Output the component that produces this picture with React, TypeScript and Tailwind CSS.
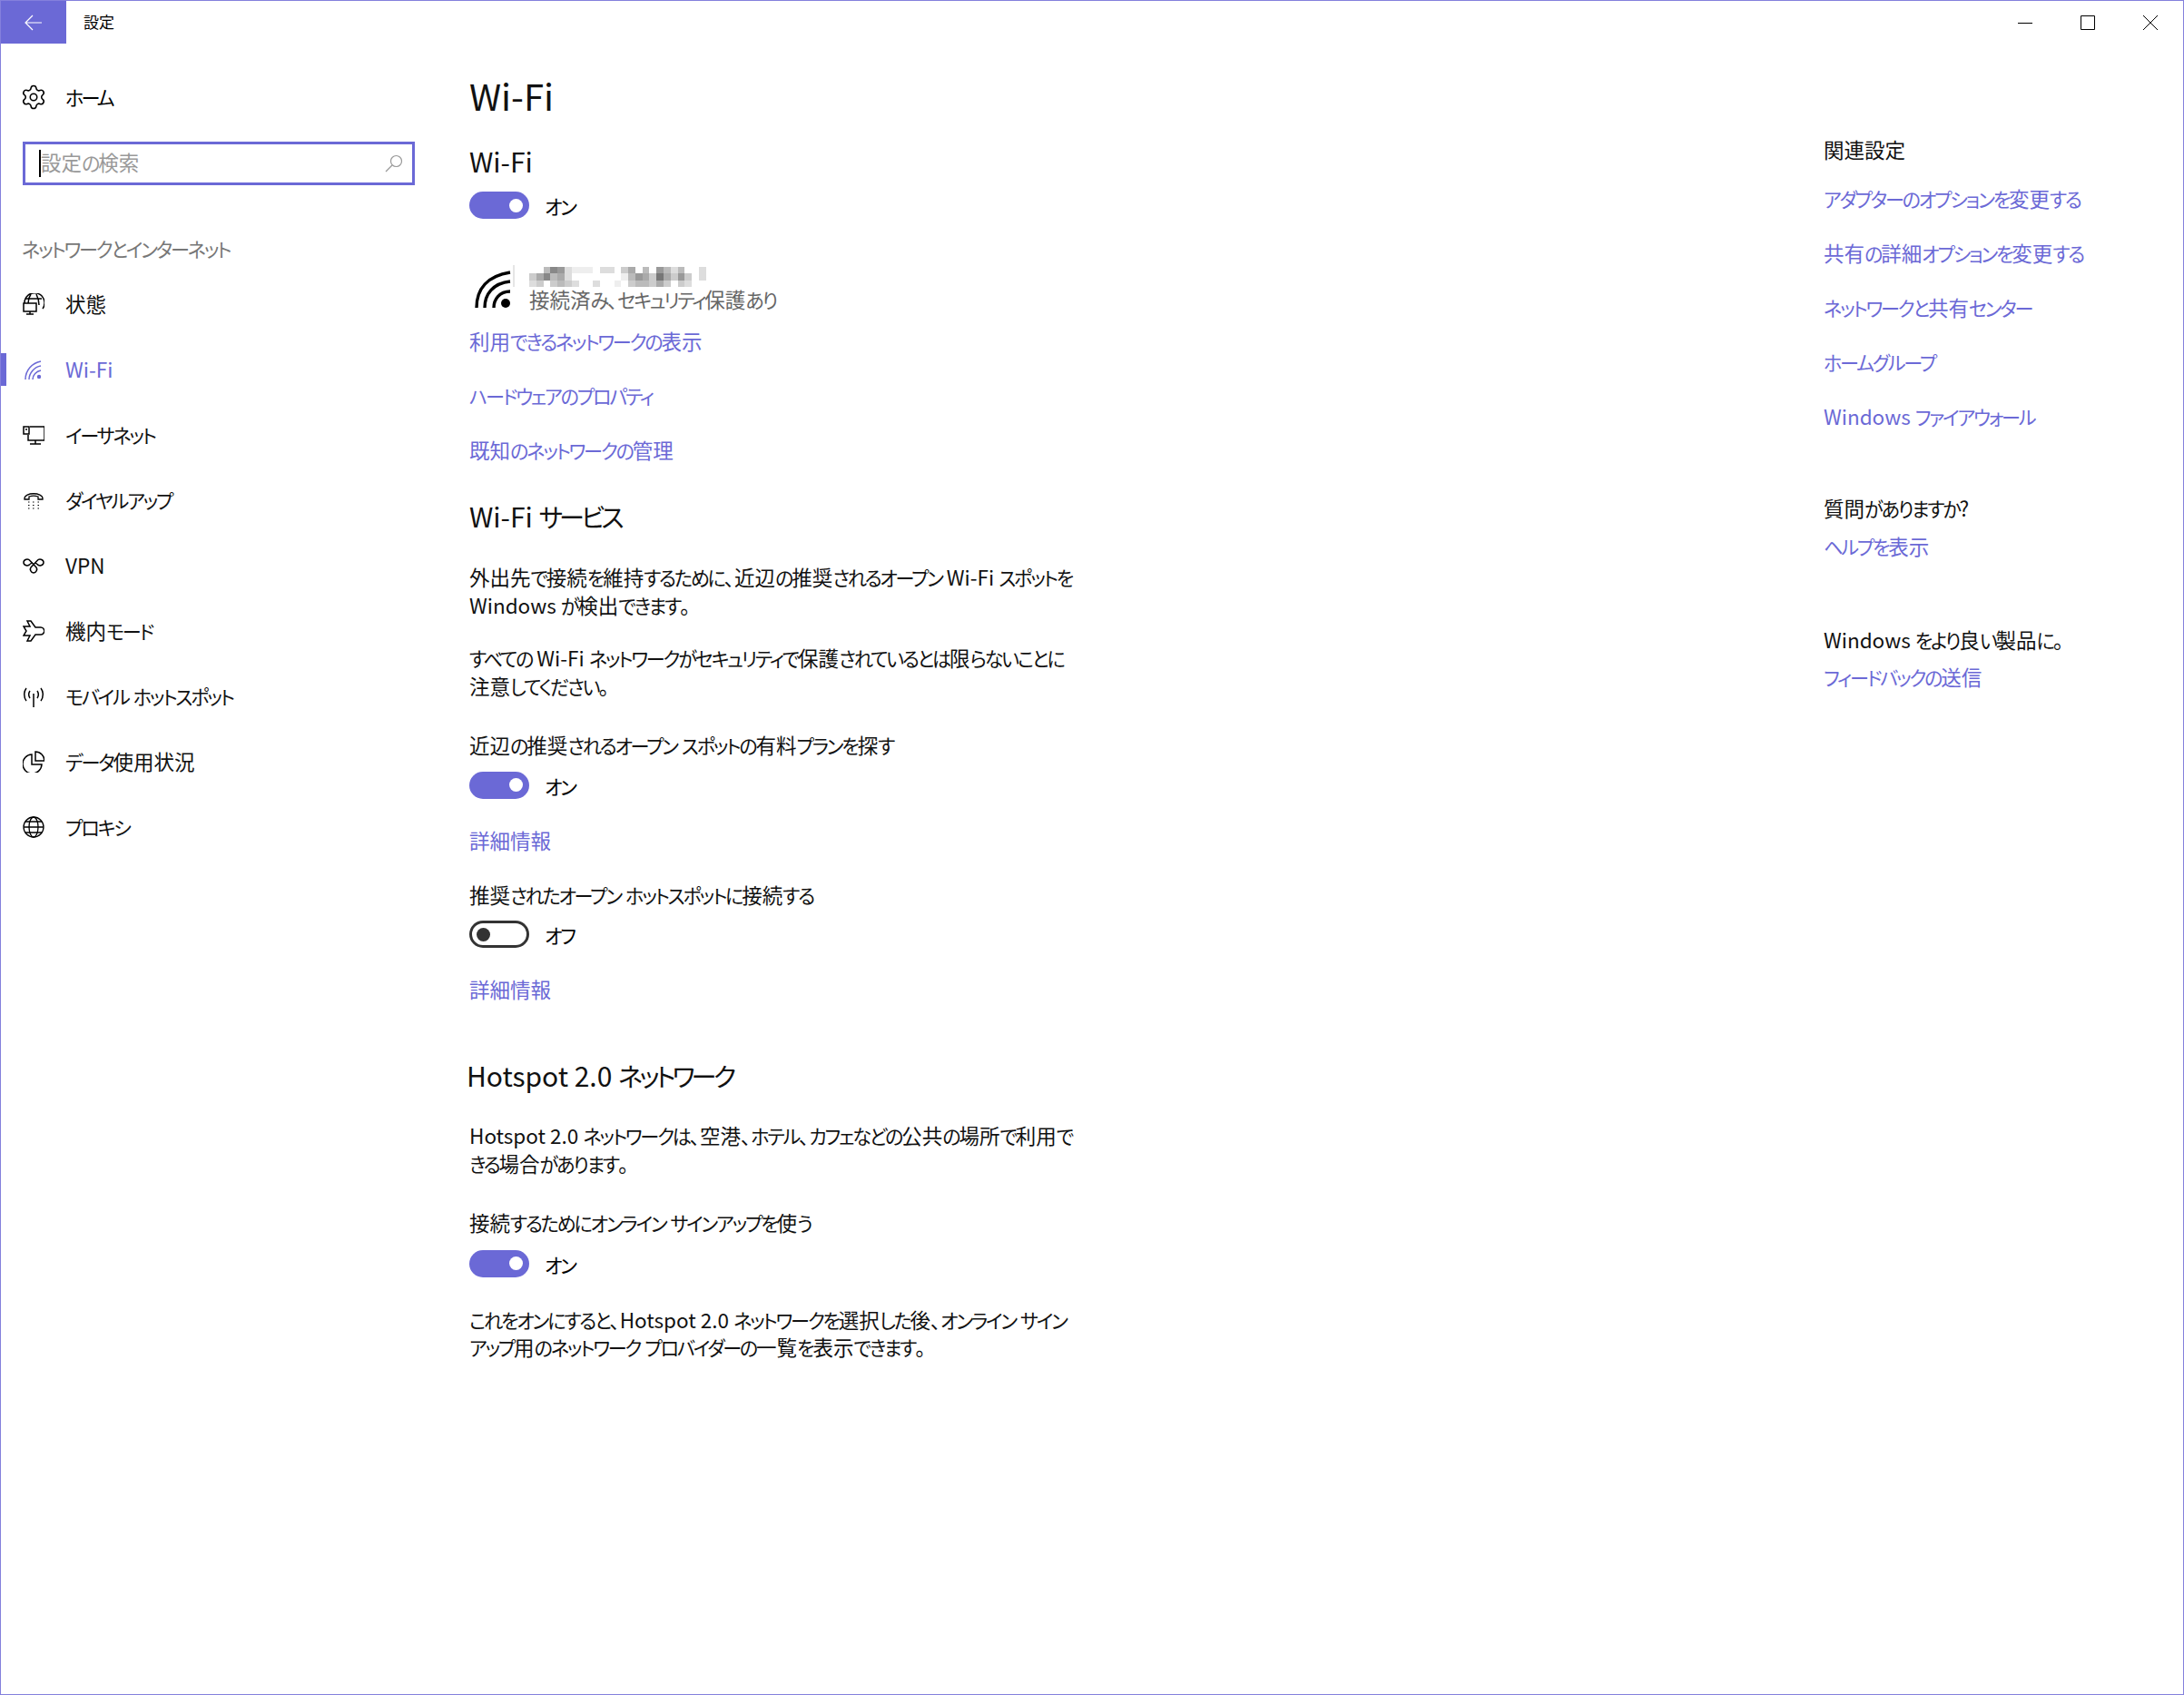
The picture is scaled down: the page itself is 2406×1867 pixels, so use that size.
import { Settings } from 'lucide-react'
import type { ReactNode } from 'react'

const jp = "font-['Noto_Sans_CJK_JP','Noto_Sans',sans-serif] [font-feature-settings:'palt']"
const accent = 'text-[#6b69d6]'
const heading = 'text-[30px] leading-[40px] text-[#111] [&_span]:tracking-[-0.135em]'

// kana in the reference font are much narrower than in Noto, so squeeze those runs
function T({ children }: { children: string }) {
  return (
    <>
      {children.split(/([\u3040-\u30ff]+)/).map((part, i) =>
        i % 2 === 1 ? (
          <span key={i} className="text-[0.94em] leading-none tracking-[-0.105em]">{part}</span>
        ) : (
          part
        )
      )}
    </>
  )
}

function Ic({ children, className = 'text-black' }: { children: ReactNode; className?: string }) {
  return (
    <svg viewBox="0 0 24 24" fill="none" stroke="currentColor" strokeWidth="1.5" className={`w-6 h-6 shrink-0 ${className}`}>
      {children}
    </svg>
  )
}

const navItems: { label: string; active?: boolean; icon: ReactNode }[] = [
  {
    label: '状態',
    icon: (
      <>
        <path d="M2 11A11 11 0 1 1 22 17" />
        <path d="M1 11H15V20H1ZM8 20v3M4 23h8M3 6h18M9 1c-2 3-3 6-3 10M15 1c2 4 3 7 3 12" />
      </>
    ),
  },
  {
    label: 'Wi-Fi',
    active: true,
    icon: (
      <>
        <path d="M3 23C3 13 10 5 20 3M7 23C7 16 13 9 20 8M11 23C11 18 15 14 20 13" />
        <circle cx="18" cy="20" r="2.2" fill="currentColor" stroke="none" />
      </>
    ),
  },
  {
    label: 'イーサネット',
    icon: <path d="M8 3H24V18H6V12M1 3H7V11H1ZM14 18V22M8 22H20M3 6H5" />,
  },
  {
    label: 'ダイヤルアップ',
    icon: (
      <>
        <path d="M2 10C2 3 22 3 22 10V11H17V8C14 7 10 7 7 8V11H2Z" strokeWidth="1.3" />
        <path d="M6 14h1.5M11 14h1.5M16.5 14h1.5M6 17.5h1.5M11 17.5h1.5M16.5 17.5h1.5M6 21h1.5M11 21h1.5M16.5 21h1.5" strokeWidth="1.2" />
      </>
    ),
  },
  {
    label: 'VPN',
    icon: (
      <>
        <path d="M8 10.5C6 13 1 12 1 8.5S6 4 8 6.5L15 14C16.500 16 15 20 12 20S7.500 16 9 14L16 6.500C18 4 23 5 23 8.500S18 13 16 10.500L13.500 8.500" />
        <path d="M10.500 8.500L8 10.500" />
      </>
    ),
  },
  {
    label: '機内モード',
    icon: <path d="M1 7H8L5 1H9L14 8H20C23 8 24 12 24 12C24 12 23 16 20 16H14L9 23H5L8 17H1L4 12Z" />,
  },
  {
    label: 'モバイル ホットスポット',
    icon: <path d="M12 9V24M4 3C1 7 1 13 4 17M20 3C23 7 23 13 20 17M8 6C6 9 6 11 8 14M16 6C18 9 18 11 16 14" />,
  },
  {
    label: 'データ使用状況',
    icon: <path d="M10 4A10.500 10.500 0 1 0 21 15H10ZM14 1V11H24A10 10 0 0 0 14 1Z" />,
  },
  {
    label: 'プロキシ',
    icon: (
      <>
        <circle cx="12" cy="12" r="11" strokeWidth="1.3" />
        <ellipse cx="12" cy="12" rx="5" ry="11" strokeWidth="1.3" />
        <path d="M1 12H23M3 6H21M3 18H21" strokeWidth="1.3" />
      </>
    ),
  },
]

function Toggle({ on }: { on: boolean }) {
  return (
    <div className="flex items-center h-[30px] gap-[17px]">
      {on ? (
        <div className="w-[66px] h-[30px] rounded-full bg-[#6b69d6] flex items-center justify-end pr-[7px]">
          <div className="w-[15px] h-[15px] rounded-full bg-white" />
        </div>
      ) : (
        <div className="w-[66px] h-[30px] rounded-full border-[3px] border-[#333] flex items-center pl-[5px]">
          <div className="w-[15px] h-[15px] rounded-full bg-[#333]" />
        </div>
      )}
      <span className="text-[22.5px] leading-[28px] text-black"><T>{on ? 'オン' : 'オフ'}</T></span>
    </div>
  )
}

function TextLink({ children, className = '' }: { children: string; className?: string }) {
  return <div className={`text-[22.5px] leading-[30px] text-[#6b69d6] ${className}`}><T>{children}</T></div>
}

function Para({ lines, className = '' }: { lines: string[]; className?: string }) {
  return (
    <p className={`text-[22.5px] leading-[30.5px] text-[#111] whitespace-nowrap ${className}`}>
      {lines.map((line) => (
        <span key={line} className="block"><T>{line}</T></span>
      ))}
    </p>
  )
}

// mosaic over the network name
const blur: [number, number, string][] = [
  [2, 0, '#bbb'], [3, 0, '#888'], [4, 0, '#999'], [5, 0, '#ddd'], [6, 0, '#eee'], [7, 0, '#eee'], [8, 0, '#eee'], [10, 0, '#ddd'], [11, 0, '#ddd'], [13, 0, '#ccc'], [14, 0, '#aaa'], [16, 0, '#bbb'], [18, 0, '#999'], [19, 0, '#bbb'], [20, 0, '#ddd'], [21, 0, '#bbb'], [24, 0, '#ddd'],
  [0, 1, '#ccc'], [1, 1, '#aaa'], [2, 1, '#888'], [3, 1, '#bbb'], [4, 1, '#aaa'], [5, 1, '#ddd'], [13, 1, '#eee'], [14, 1, '#bbb'], [15, 1, '#999'], [16, 1, '#aaa'], [17, 1, '#ccc'], [18, 1, '#777'], [19, 1, '#aaa'], [20, 1, '#ccc'], [21, 1, '#999'], [22, 1, '#ccc'], [24, 1, '#ddd'],
  [0, 2, '#ddd'], [1, 2, '#ccc'], [3, 2, '#ccc'], [4, 2, '#bbb'], [5, 2, '#ccc'], [6, 2, '#ddd'], [9, 2, '#ddd'], [12, 2, '#eee'], [14, 2, '#ccc'], [15, 2, '#bbb'], [16, 2, '#bbb'], [17, 2, '#ccc'], [18, 2, '#aaa'], [19, 2, '#ccc'], [21, 2, '#ccc'], [22, 2, '#ddd'],
]

export default function App() {
  return (
    <div className={`w-[2406px] h-[1867px] bg-white border border-[#8480dc] flex flex-col overflow-hidden ${jp}`}>
      <div className="flex h-[47px] shrink-0">
        <div className="w-[72px] bg-[#6b69d6] flex items-center justify-center text-white">
          <svg viewBox="0 0 20 20" fill="none" stroke="currentColor" strokeWidth="1.2" className="w-[20px] h-[20px]">
            <path d="M19 10H1M9 2L1 10L9 18" />
          </svg>
        </div>
        <div className="ml-[19px] text-[17px] leading-[45px] text-black">設定</div>
        <div className="ml-auto flex items-center text-black">
          <svg viewBox="0 0 16 16" fill="none" stroke="currentColor" className="w-4 h-4 mr-[53px]"><path d="M0 8.500H16" /></svg>
          <svg viewBox="0 0 16 16" fill="none" stroke="currentColor" className="w-4 h-4 mr-[53px]"><path d="M.5.5H15.500V15.500H.5Z" /></svg>
          <svg viewBox="0 0 16 16" fill="none" stroke="currentColor" className="w-4 h-4 mr-[28px]"><path d="M0 0L16 16M16 0L0 16" /></svg>
        </div>
      </div>

      <div className="flex flex-1">
        <nav className="w-[516px] shrink-0 pl-[24px]">
          <div className="flex items-center h-[72px] mt-[23px] gap-[20px] text-[22.5px] text-black -ml-[3px] [&_span]:tracking-[-0.14em]">
            <Settings size={30} strokeWidth={1.25} />
            <span><T>ホーム</T></span>
          </div>
          <div className="w-[432px] h-[48px] mt-[13px] border-[3px] border-[#6b69d6] flex items-center pl-[15px] pr-[10px]">
            <div className="w-[2px] h-[30px] bg-black" />
            <span className="text-[22.5px] leading-[33px] h-[36px] text-[#999] flex-1"><T>設定の検索</T></span>
            <svg viewBox="0 0 20 20" fill="none" stroke="#999" strokeWidth="1.2" className="w-[20px] h-[20px]">
              <circle cx="12.500" cy="7.500" r="6" />
              <path d="M8 12L1 19" />
            </svg>
          </div>
          <div className="mt-[51px] h-[36px] text-[22.5px] leading-[36px] text-[#777] -ml-[1px]"><T>ネットワークとインターネット</T></div>
          <div className="mt-[8px] -ml-[24px]">
            {navItems.map((item) => (
              <div key={item.label} className="relative flex items-center h-[72px] pl-[24px] gap-[23px]">
                {item.active && <div className="absolute left-0 top-[18px] w-[6px] h-[36px] bg-[#6b69d6]" />}
                <Ic className={item.active ? accent : 'text-black'}>{item.icon}</Ic>
                <span className={`text-[22.5px] ${item.active ? accent : 'text-[#111]'}`}><T>{item.label}</T></span>
              </div>
            ))}
          </div>
        </nav>

        <main className="w-[680px] shrink-0">
          <h1 className="text-[40px] leading-[60px] text-[#111] mt-[27px]">Wi-Fi</h1>
          <h2 className={`${heading} mt-[22px]`}>Wi-Fi</h2>
          <div className="mt-[14px]"><Toggle on /></div>
          <div className="flex mt-[50px] h-[60px]">
            <svg viewBox="0 0 50 50" fill="none" stroke="#000" strokeWidth="3.400" className="w-[50px] h-[50px] mt-[1px]">
              <path d="M8 47C8 26 20 12 45 8M17 47C17 32 26 20 45 18M27 47C27 38 33 29 45 29" />
              <circle cx="40" cy="42" r="5" fill="#000" stroke="none" />
              <path d="M49 0V24" stroke="#ccc" strokeWidth="1" />
            </svg>
            <div className="ml-[16px]">
              <svg viewBox="0 0 154 18" className="w-[200px] h-[22px] mt-[3px]" shapeRendering="crispEdges" preserveAspectRatio="none">
                {blur.map(([x, y, c]) => (
                  <rect key={`${x}-${y}`} x={x * 6} y={y * 6} width="6" height="6" fill={c} />
                ))}
              </svg>
              <div className="text-[22.5px] leading-[30px] text-[#666] -mt-[2px]"><T>接続済み、セキュリティ保護あり</T></div>
            </div>
          </div>
          <TextLink className="mt-[9px]">利用できるネットワークの表示</TextLink>
          <TextLink className="mt-[30px]">ハードウェアのプロパティ</TextLink>
          <TextLink className="mt-[30px]">既知のネットワークの管理</TextLink>
          <h2 className={`${heading} mt-[38px]`}><T>Wi-Fi サービス</T></h2>
          <Para className="mt-[32px]" lines={['外出先で接続を維持するために、近辺の推奨されるオープン Wi-Fi スポットを', 'Windows が検出できます。']} />
          <Para className="mt-[28px]" lines={['すべての Wi-Fi ネットワークがセキュリティで保護されているとは限らないことに', '注意してください。']} />
          <Para className="mt-[35px]" lines={['近辺の推奨されるオープン スポットの有料プランを探す']} />
          <div className="mt-[14px]"><Toggle on /></div>
          <TextLink className="mt-[30px]">詳細情報</TextLink>
          <Para className="mt-[30px]" lines={['推奨されたオープン ホットスポットに接続する']} />
          <div className="mt-[14px]"><Toggle on={false} /></div>
          <TextLink className="mt-[30px]">詳細情報</TextLink>
          <h2 className={`${heading} mt-[60px] -ml-[3px]`}><T>Hotspot 2.0 ネットワーク</T></h2>
          <Para className="mt-[31px]" lines={['Hotspot 2.0 ネットワークは、空港、ホテル、カフェなどの公共の場所で利用で', 'きる場合があります。']} />
          <Para className="mt-[35px]" lines={['接続するためにオンライン サインアップを使う']} />
          <div className="mt-[15px]"><Toggle on /></div>
          <Para className="mt-[31px]" lines={['これをオンにすると、Hotspot 2.0 ネットワークを選択した後、オンライン サイン', 'アップ用のネットワーク プロバイダーの一覧を表示できます。']} />
        </main>

        <aside className="ml-[812px] w-[380px]">
          <div className="text-[22.5px] leading-[30px] text-[#111] mt-[101px]"><T>関連設定</T></div>
          <TextLink className="mt-[24px]">アダプターのオプションを変更する</TextLink>
          <TextLink className="mt-[30px]">共有の詳細オプションを変更する</TextLink>
          <TextLink className="mt-[30px]">ネットワークと共有センター</TextLink>
          <TextLink className="mt-[30px]">ホームグループ</TextLink>
          <TextLink className="mt-[30px]">Windows ファイアウォール</TextLink>
          <div className="text-[22.5px] leading-[30px] text-[#111] mt-[71px]"><T>質問がありますか?</T></div>
          <TextLink className="mt-[12px]">ヘルプを表示</TextLink>
          <div className="text-[22.5px] leading-[30px] text-[#111] mt-[73px]"><T>Windows をより良い製品に。</T></div>
          <TextLink className="mt-[11px]">フィードバックの送信</TextLink>
        </aside>
      </div>
    </div>
  )
}
